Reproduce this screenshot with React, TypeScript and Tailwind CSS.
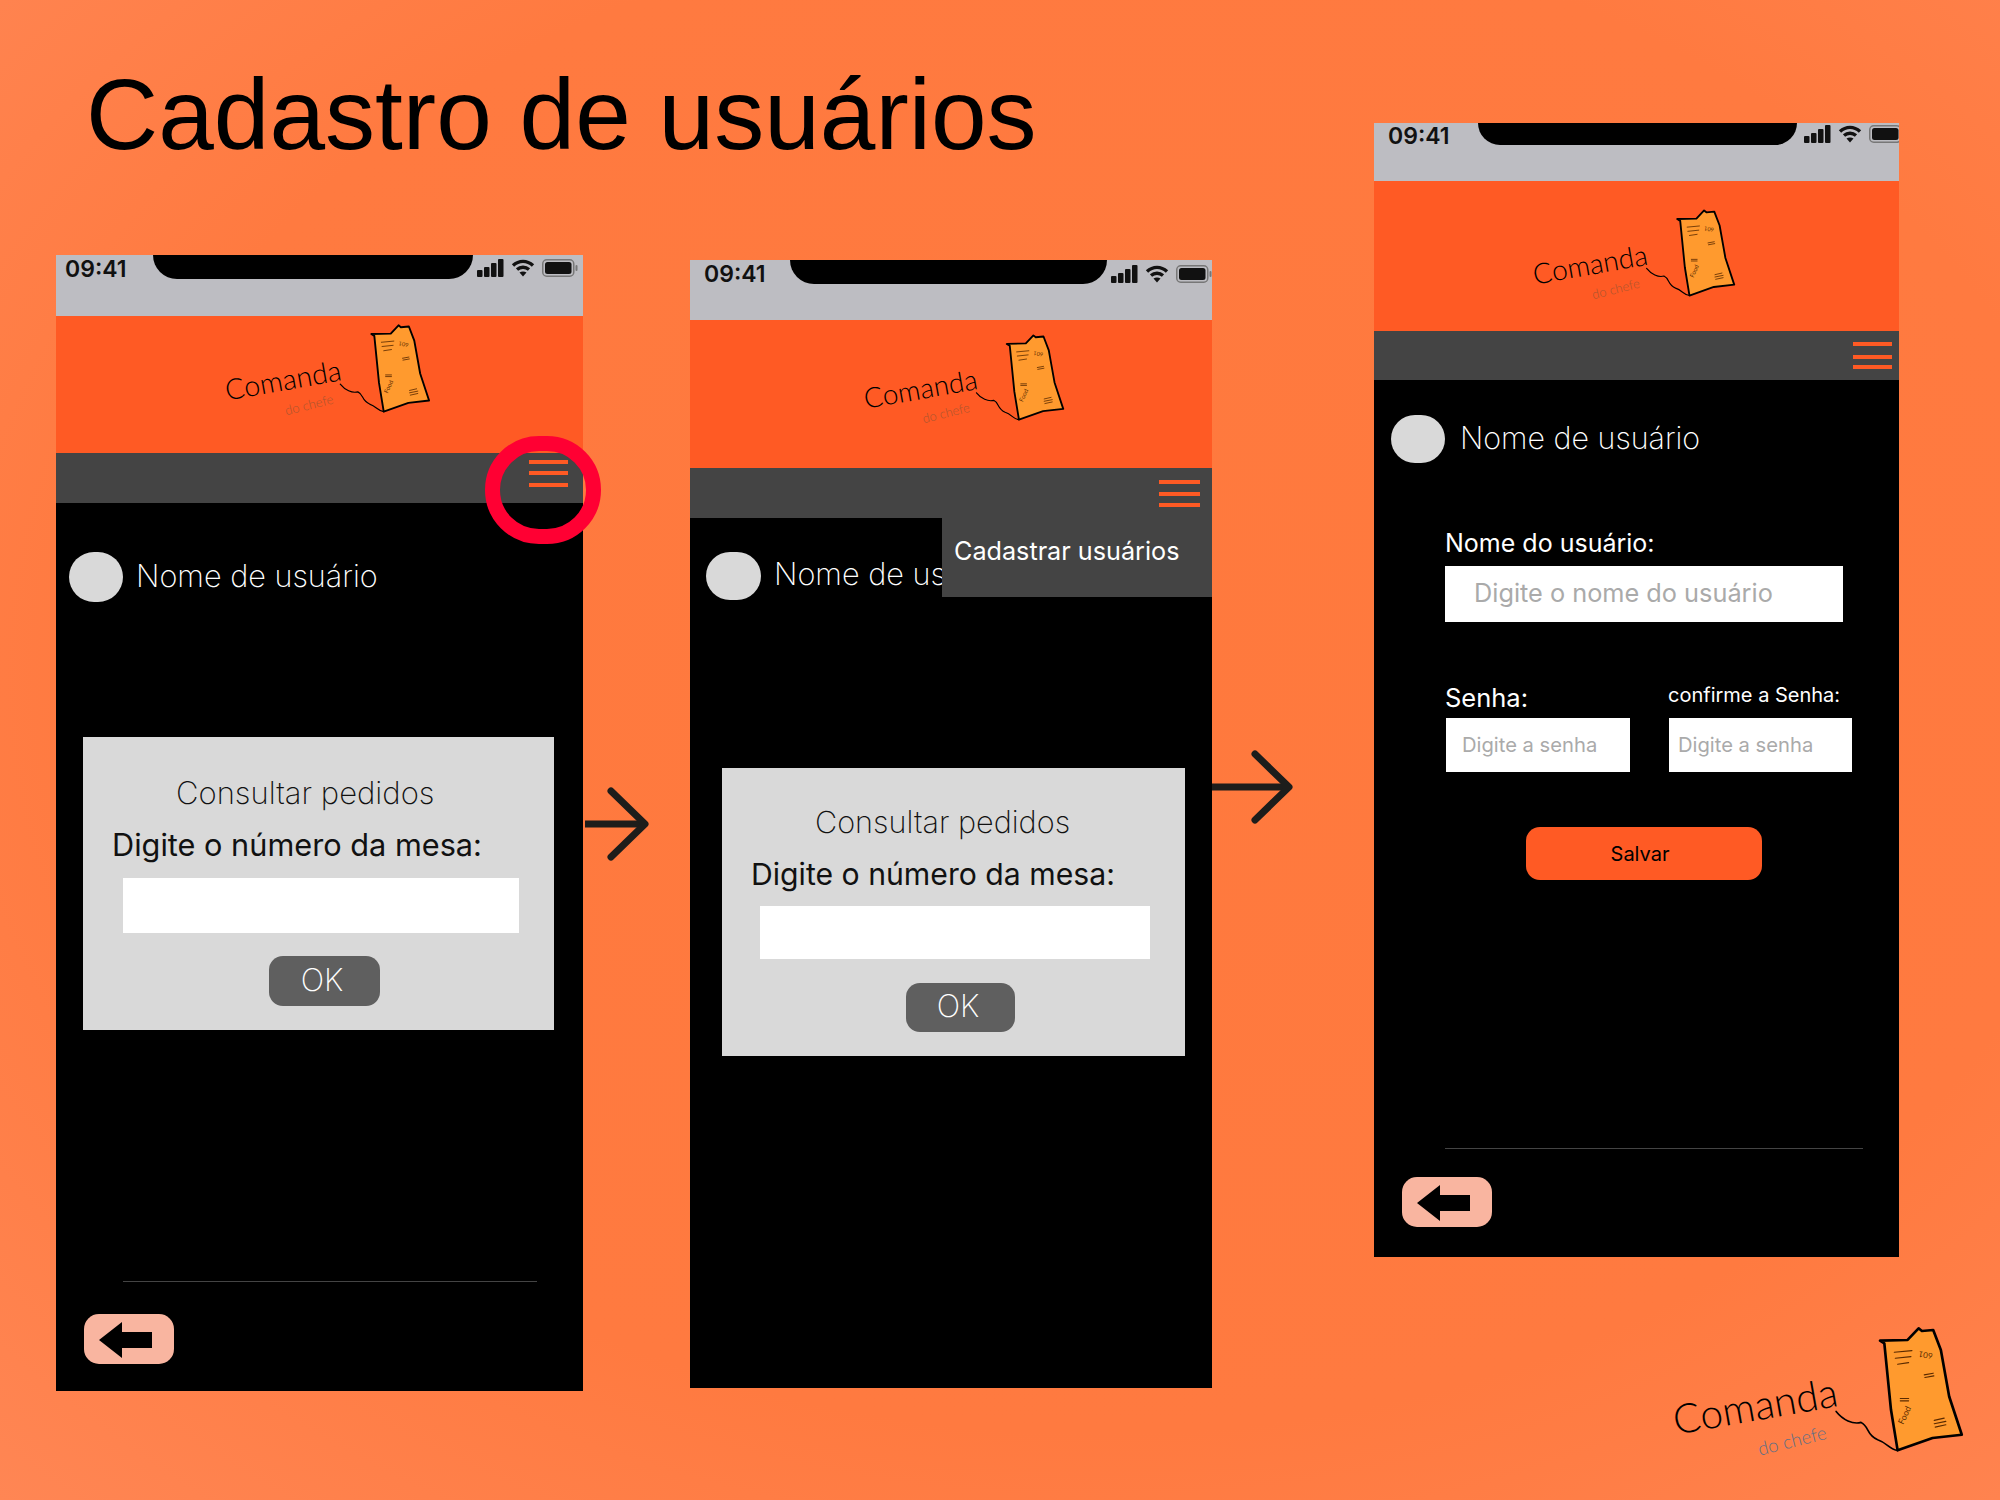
import type { ReactNode } from 'react';

function Logo({ className, subColor }: { className: string; subColor: string }) {
  return (
    <svg viewBox="100 75 880 400" className={`overflow-visible ${className}`} fill="none" strokeLinecap="round" strokeLinejoin="round">
      <text
        x="108"
        y="405"
        transform="rotate(-10 108 405)"
        fontFamily="Lato, sans-serif"
        fontWeight="300"
        fontSize="122"
        fill="#000"
      >
        Comanda
      </text>
      <text
        x="360"
        y="468"
        transform="rotate(-14 360 468)"
        fontFamily="Lato, sans-serif"
        fontWeight="300"
        fontSize="56"
        fill={subColor}
      >
        do chefe
      </text>
      <path d="M590 335C610 360 640 375 665 368C690 380 680 405 715 420C745 430 750 450 775 452" stroke="#000" strokeWidth="5" />
      <path
        d="M722 122L805 120L838 85L848 93L882 90L905 150L930 290L968 405L880 415L775 452L755 330L735 130Z"
        fill="#FF9A2E"
        stroke="#000"
        strokeWidth="8"
      />
      <path
        d="M765 157L818 152M768 175L815 170M775 193L808 188M855 225L882 220M857 233L884 228M783 296L808 296M783 303L808 303M885 362L915 355M885 372L920 365M888 382L920 375"
        stroke="#5a2a00"
        strokeWidth="3.5"
      />
      <text x="850" y="172" transform="rotate(190 865 165)" fontFamily="Lato, sans-serif" fontSize="24" fill="#5a2a00">
        601
      </text>
      <text x="792" y="376" transform="rotate(-65 792 376)" fontFamily="Lato, sans-serif" fontSize="26" fill="#5a2a00">
        Food
      </text>
    </svg>
  );
}

function StatusIcons() {
  return (
    <div className="flex items-center gap-[7px]">
      <svg viewBox="0 0 27 18" className="w-[27px] h-[18px]" fill="#111">
        <rect x="0" y="11" width="5.5" height="7" rx="1" />
        <rect x="7" y="8" width="5.5" height="10" rx="1" />
        <rect x="14" y="4" width="5.5" height="14" rx="1" />
        <rect x="21" y="0" width="5.5" height="18" rx="1" />
      </svg>
      <svg viewBox="0 0 24 18" className="w-[24px] h-[18px]" fill="none" stroke="#111" strokeWidth="3.4">
        <path d="M2 6.5C8 1 16 1 22 6.5" />
        <path d="M6 10.5C9.5 7.5 14.5 7.5 18 10.5" />
        <path d="M12 17.5L8.5 13.6C10.5 12 13.5 12 15.5 13.6Z" fill="#111" stroke="none" />
      </svg>
      <svg viewBox="0 0 36 18" className="w-[36px] h-[18px] shrink-0">
        <rect x="0.75" y="0.75" width="31" height="16.5" rx="4" fill="none" stroke="#777" strokeWidth="1.5" />
        <rect x="3" y="3" width="26.5" height="12" rx="2.5" fill="#111" />
        <rect x="33.5" y="6" width="2" height="6" rx="1" fill="#777" />
      </svg>
    </div>
  );
}

function StatusBar({ className, timeClass, notchClass, iconsClass }: { className: string; timeClass: string; notchClass: string; iconsClass: string }) {
  return (
    <div className={`relative flex shrink-0 bg-[#bdbdc2] ${className}`}>
      <span className={`font-semibold text-[23px] leading-[28px] text-[#111] ${timeClass}`}>09:41</span>
      <div className={`absolute top-0 bg-black rounded-b-[26px] ${notchClass}`} />
      <div className={`ml-auto ${iconsClass}`}>
        <StatusIcons />
      </div>
    </div>
  );
}

function Hamburger({ className, midClass, lastClass }: { className: string; midClass: string; lastClass: string }) {
  return (
    <div className={`flex flex-col ${className}`}>
      <div className="h-[4px] bg-[#ff5a24]" />
      <div className={`h-[4px] bg-[#ff5a24] ${midClass}`} />
      <div className={`h-[4px] bg-[#ff5a24] ${lastClass}`} />
    </div>
  );
}

function UserRow({ className, avatarClass, gapClass, nameClass }: { className: string; avatarClass: string; gapClass: string; nameClass: string }) {
  return (
    <div className={`flex items-center ${gapClass} ${className}`}>
      <div className={`rounded-full bg-[#d9d9d9] shrink-0 ${avatarClass}`} />
      <span className={`text-white font-extralight leading-[40px] whitespace-nowrap ${nameClass}`}>Nome de usuário</span>
    </div>
  );
}

function BackButton({ className }: { className: string }) {
  return (
    <button className={`block w-[90px] h-[50px] rounded-[15px] bg-[#f9b5a0] ${className}`}>
      <svg viewBox="0 0 90 50" className="w-[90px] h-[50px]" fill="#000">
        <polygon points="15,26 38,8 38,18 68,18 68,34 38,34 38,44" />
      </svg>
    </button>
  );
}

function Arrow({ className, viewBox, shaft, head }: { className: string; viewBox: string; shaft: string; head: string }) {
  return (
    <svg viewBox={viewBox} className={`absolute ${className}`} fill="none" stroke="#1d1d1b" strokeWidth="7" strokeLinecap="round" strokeLinejoin="round">
      <path d={shaft} strokeLinecap="butt" />
      <path d={head} />
    </svg>
  );
}

function Field({ className, text, textClass }: { className: string; text: string; textClass: string }) {
  return (
    <div className={`bg-white flex items-center text-[#aaaaaa] whitespace-nowrap ${className} ${textClass}`}>{text}</div>
  );
}

function Shell({ className, children }: { className: string; children: ReactNode }) {
  return <div className={`absolute flex flex-col overflow-hidden bg-black ${className}`}>{children}</div>;
}

export default function App() {
  return (
    <div className="relative w-[2000px] h-[1500px] overflow-hidden font-['Inter',sans-serif] bg-[radial-gradient(ellipse_at_55%_45%,#ff793d_0%,#ff7a40_65%,#ff8654_100%)]">
      <h1 className="pl-[86px] pt-[57px] font-['Liberation_Sans',Arial,sans-serif] font-normal text-[100px] leading-[115px] text-black">
        Cadastro de usuários
      </h1>

      {/* Primeira tela */}
      <Shell className="left-[56px] top-[255px] w-[527px] h-[1136px]">
        <StatusBar className="h-[61px]" timeClass="pl-[9px]" notchClass="left-[97px] w-[320px] h-[24px]" iconsClass="pr-[5px] pt-[4px]" />
        <div className="h-[137px] shrink-0 bg-[#ff5a24] pl-[169px] pt-[7px]">
          <Logo className="w-[207px] h-[94px]" subColor="#a8552f" />
        </div>
        <div className="h-[50px] shrink-0 bg-[#444444] flex justify-end pt-[7px] pr-[15px]">
          <Hamburger className="w-[39px]" midClass="mt-[7px]" lastClass="mt-[8px]" />
        </div>
        <UserRow className="pt-[49px] pl-[13px]" avatarClass="w-[54px] h-[50px]" gapClass="gap-[13px]" nameClass="pb-[3px] text-[30.6px]" />
        <div className="mt-[135px] ml-[27px] w-[471px] h-[293px] shrink-0 bg-[#d9d9d9] flex flex-col">
          <span className="mt-[38px] ml-[93px] h-[36px] text-[31px] leading-[36px] font-extralight text-[#111]">Consultar pedidos</span>
          <span className="mt-[16px] ml-[29px] h-[36px] text-[30.7px] leading-[36px] text-[#111] whitespace-nowrap">Digite o número da mesa:</span>
          <div className="mt-[15px] ml-[40px] w-[396px] h-[55px] bg-white" />
          <button className="mt-[23px] ml-[186px] w-[111px] h-[50px] pr-[5px] pb-[2px] rounded-[14px] bg-[#5f5f5f] text-white font-extralight text-[31px]">OK</button>
        </div>
        <div className="mt-[251px] ml-[67px] w-[414px] h-px shrink-0 bg-[#444444]" />
        <BackButton className="mt-[32px] ml-[28px]" />
      </Shell>

      <div className="absolute left-[485px] top-[436px] w-[116px] h-[108px] rounded-full border-[15px] border-[#ff0033]" />
      <Arrow className="left-[585px] top-[787px] w-[64px] h-[74px]" viewBox="0 0 64 74" shaft="M0 37H60" head="M26 4L60 37L26 70" />

      {/* Segunda tela, menu aberto */}
      <Shell className="left-[690px] top-[260px] w-[522px] h-[1128px]">
        <StatusBar className="h-[60px]" timeClass="pl-[14px]" notchClass="left-[100px] w-[317px] h-[24px]" iconsClass="pr-[0px] pt-[5px]" />
        <div className="h-[148px] shrink-0 bg-[#ff5a24] pl-[174px] pt-[13px]">
          <Logo className="w-[202px] h-[92px]" subColor="#a8552f" />
        </div>
        <div className="h-[50px] shrink-0 bg-[#444444] flex justify-end pt-[12px] pr-[12px]">
          <Hamburger className="w-[41px]" midClass="mt-[8px]" lastClass="mt-[7px]" />
        </div>
        <UserRow className="pt-[34px] pl-[16px]" avatarClass="w-[55px] h-[48px]" gapClass="gap-[13px]" nameClass="pb-[5px] text-[30.6px]" />
        <div className="mt-[168px] ml-[32px] w-[463px] h-[288px] shrink-0 bg-[#d9d9d9] flex flex-col">
          <span className="mt-[36px] ml-[93px] h-[36px] text-[30.6px] leading-[36px] font-extralight text-[#111]">Consultar pedidos</span>
          <span className="mt-[16px] ml-[29px] h-[36px] text-[30.2px] leading-[36px] text-[#111] whitespace-nowrap">Digite o número da mesa:</span>
          <div className="mt-[14px] ml-[38px] w-[390px] h-[53px] bg-white" />
          <button className="mt-[24px] ml-[184px] w-[109px] h-[49px] pr-[5px] pb-[2px] rounded-[14px] bg-[#5f5f5f] text-white font-extralight text-[31px]">OK</button>
        </div>
        {/* menu lateral */}
        <div className="absolute left-[252px] top-[258px] w-[270px] h-[79px] bg-[#444444] pl-[12px] pt-[15px] text-white text-[25.2px] leading-[36px] whitespace-nowrap">
          Cadastrar usuários
        </div>
      </Shell>

      <Arrow className="left-[1212px] top-[750px] w-[81px] h-[74px]" viewBox="0 0 81 74" shaft="M0 37H77" head="M43 4L77 37L43 70" />

      {/* Terceira tela, cadastro */}
      <Shell className="left-[1374px] top-[123px] w-[525px] h-[1134px]">
        <StatusBar className="h-[58px]" timeClass="pl-[14px] -mt-[1px]" notchClass="left-[104px] w-[319px] h-[22px]" iconsClass="-mr-[6px] pt-[2px]" />
        <div className="h-[150px] shrink-0 bg-[#ff5a24] pl-[159px] pt-[27px]">
          <Logo className="w-[204px] h-[93px]" subColor="#a8552f" />
        </div>
        <div className="h-[49px] shrink-0 bg-[#444444] flex justify-end pt-[11px] pr-[7px]">
          <Hamburger className="w-[39px]" midClass="mt-[9px]" lastClass="mt-[6px]" />
        </div>
        <UserRow className="pt-[35px] pl-[17px]" avatarClass="w-[54px] h-[48px]" gapClass="gap-[15px]" nameClass="pb-[3px] text-[30.4px]" />
        <div className="mt-[65px] ml-[71px] h-[30px] text-white text-[25px] leading-[30px] whitespace-nowrap">Nome do usuário:</div>
        <Field className="mt-[8px] ml-[71px] w-[398px] h-[56px] shrink-0 pl-[29px] pb-[2px]" text="Digite o nome do usuário" textClass="text-[25.3px]" />
        <div className="mt-[61px] ml-[71px] flex">
          <div className="flex flex-col w-[223px]">
            <span className="h-[30px] text-white text-[25.5px] leading-[30px]">Senha:</span>
            <Field className="mt-[5px] ml-[1px] w-[184px] h-[54px] pl-[16px]" text="Digite a senha" textClass="text-[20.2px]" />
          </div>
          <div className="flex flex-col w-[184px]">
            <span className="h-[30px] -mt-[3px] mb-[3px] text-white text-[20px] leading-[30px] whitespace-nowrap">confirme a Senha:</span>
            <Field className="mt-[5px] ml-[1px] w-[183px] h-[54px] pl-[9px]" text="Digite a senha" textClass="text-[20.2px]" />
          </div>
        </div>
        <button className="mt-[55px] ml-[152px] w-[236px] h-[53px] shrink-0 rounded-[14px] bg-[#ff5a24] text-black text-[20px] pr-[8px]">Salvar</button>
        <div className="mt-[268px] ml-[71px] w-[418px] h-px shrink-0 bg-[#444444]" />
        <BackButton className="mt-[28px] ml-[28px]" />
      </Shell>

      <Logo className="absolute left-[1673px] top-[1325px] w-[293px] h-[133px]" subColor="#5f6f85" />
    </div>
  );
}
